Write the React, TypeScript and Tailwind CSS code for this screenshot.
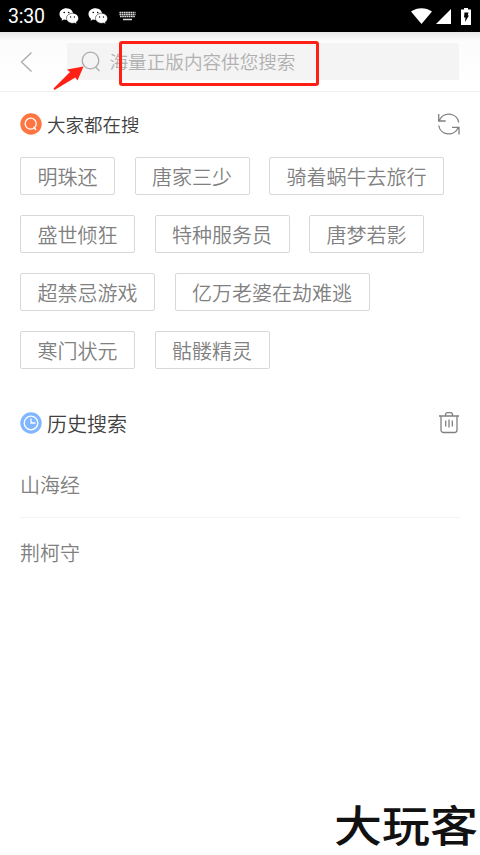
const hotWords = [
  '明珠还',
  '唐家三少',
  '骑着蜗牛去旅行',
  '盛世倾狂',
  '特种服务员',
  '唐梦若影',
  '超禁忌游戏',
  '亿万老婆在劫难逃',
  '寒门状元',
  '骷髅精灵',
];

const history = ['山海经', '荆柯守'];

function WeChatIcon() {
  return (
    <svg className="h-[17px] w-5" viewBox="0 0 20 17" fill="none">
      <path d="M7.500.3C3.600.3.500 2.900.5 6.200c0 1.900 1 3.500 2.600 4.500l-.6 2.100 2.500-1.200c.8.200 1.600.3 2.500.3 3.900 0 6.700-2.600 6.700-5.700S11.400.3 7.500.3Z" fill="#fff" />
      <path d="M13.500 5.300c-3.400 0-6 2.200-6 5s2.600 5 6 5c.7 0 1.400-.1 2-.3l2.200 1.100-.5-1.900c1.400-.9 2.300-2.300 2.300-3.900 0-2.800-2.600-5-6-5Z" fill="#fff" stroke="#000" strokeWidth=".5" />
      <circle cx="5.200" cy="4.500" r=".8" fill="#000" />
      <circle cx="9.700" cy="4.500" r=".8" fill="#000" />
      <circle cx="11.600" cy="9" r=".65" fill="#000" />
      <circle cx="15.400" cy="9" r=".65" fill="#000" />
    </svg>
  );
}

function StatusBar() {
  return (
    <div className="flex h-8 items-center bg-black pr-[9px] pl-2 text-white">
      <span className="w-[50.500px] pt-[2px] font-['Roboto',sans-serif] text-[19.500px] leading-[30px] font-[450] tracking-[-0.2px]">3:30</span>
      <WeChatIcon />
      <div className="ml-[9.500px]">
        <WeChatIcon />
      </div>
      <svg className="ml-[11px] h-[10px] w-[17px]" viewBox="0 0 17 10" stroke="#ddd" fill="none">
        <path d="M.5 1.500h16M.5 3.500h16M1 5.500h15" strokeWidth="1.500" strokeDasharray="1.700 .5" />
        <path d="M4 8.500h9" strokeWidth="1.500" />
      </svg>
      <div className="ml-auto flex items-center">
        <svg className="h-4 w-[21px]" viewBox="0 0 21 16">
          <path d="M0 3.500C6-1 15-1 21 3.500L10.500 16Z" fill="#fff" />
        </svg>
        <svg className="ml-1 h-[15px] w-[15px]" viewBox="0 0 15 15">
          <path d="M15 0v15H0Z" fill="#fff" />
        </svg>
        <svg className="ml-[10px] h-[17px] w-[10px]" viewBox="0 0 10 17">
          <path d="M3 0h4v1.500h3V17H0V1.500h3Z" fill="#fff" />
          <path d="M3.500 4.500h4L6.700 7.500H8L4 14l.5-4.500H3Z" fill="#000" />
        </svg>
      </div>
    </div>
  );
}

function SearchBar() {
  return (
    <header className="relative flex h-[60px] items-center border-b border-[#f0f0f0] bg-linear-to-b from-[#e8e8e8] via-[#fcfcfc] via-15% to-white pr-[21px] pl-5">
      <svg className="h-[22px] w-[14px]" viewBox="0 0 14 22" fill="none" stroke="#aaa" strokeWidth="1.300">
        <path d="M11.500 1.500 1.500 11l10 9.500" />
      </svg>
      <div className="ml-[33px] flex h-[37px] flex-1 items-center rounded-xs bg-[#f4f4f4] pl-[14px]">
        <svg className="h-[21px] w-5" viewBox="0 0 20 21" fill="none" stroke="#aaa" strokeWidth="1.300">
          <circle cx="9.500" cy="9.500" r="8.300" />
          <path d="m14.500 16 4 4" />
        </svg>
        <span className="ml-[8.500px] text-[18.600px] leading-none text-[#b0b0b0]">海量正版内容供您搜索</span>
      </div>
      <div className="absolute top-[9px] left-[119px] h-[45px] w-[200px] rounded-[3px] border-3 border-[#ff2015]" />
      <svg className="absolute top-[34px] left-[53px] h-6 w-[31px]" viewBox="0 0 31 24">
        <path d="M.5 22.500 17 6 14 3.500 30.500.5 24.500 14.500 22.300 11.500 1.500 24Z" fill="#ff2015" />
      </svg>
    </header>
  );
}

function RefreshIcon() {
  return (
    <svg className="h-6 w-6" viewBox="0 0 24 24" fill="none" stroke="#808080" strokeWidth="1.300">
      <path d="M21.800 10.500A10.200 10.200 0 0 0 2.300 8.500M1.700 2v7h7M1.700 13.500A10.200 10.200 0 0 0 21.200 15.500M22 22.500v-7.200h-7" />
    </svg>
  );
}

function TrashIcon() {
  return (
    <svg className="h-6 w-6" viewBox="0 0 24 24" fill="none" stroke="#808080" strokeWidth="1.300">
      <path d="M2 5h20M4 5v14a2.500 2.500 0 0 0 2.500 2.500h11A2.500 2.500 0 0 0 20 19V5M8.500 5V3.800c0-1.400.8-2.200 2-2.200h3c1.200 0 2 .8 2 2.200V5M8.700 9.500v6M12 8.500v8M15.300 9.500v6" />
    </svg>
  );
}

export default function App() {
  return (
    <div className="relative h-[855px] w-[480px] overflow-hidden bg-white font-['Noto_Sans_CJK_SC',sans-serif] font-[350]">
      <StatusBar />
      <SearchBar />

      <main className="px-5">
        <section>
          <div className="flex h-16 items-center">
            <svg className="h-[22px] w-[22px]" viewBox="0 0 22 22" fill="none">
              <circle cx="11" cy="11" r="10.700" fill="#ff7541" />
              <circle cx="10.700" cy="10.700" r="5.500" stroke="#fff" strokeWidth="1.300" />
              <path d="m13.500 14 2.500 3" stroke="#fff" strokeWidth="1.300" />
            </svg>
            <h2 className="ml-[5px] text-[18.500px] leading-none text-[#404040]">大家都在搜</h2>
            <button className="-mr-[1px] ml-auto">
              <RefreshIcon />
            </button>
          </div>
          <div className="-mr-2 flex flex-wrap gap-x-[19.500px] gap-y-5 pt-[1px]">
            {hotWords.map((word) => (
              <span key={word} className="flex h-[38px] items-center rounded-xs border border-[#d8d8d8] px-[16.500px] pt-[2px] text-xl leading-none text-[#808080]">
                {word}
              </span>
            ))}
          </div>
        </section>

        <section className="mt-[30px]">
          <div className="flex h-12 items-center">
            <svg className="h-[22px] w-[22px]" viewBox="0 0 22 22" fill="none">
              <circle cx="11" cy="11" r="10.700" fill="#80b6ff" />
              <circle cx="11" cy="11" r="6.800" stroke="#fff" strokeWidth="1.300" />
              <path d="M11 6.500V11h4.500" stroke="#fff" strokeWidth="1.300" />
            </svg>
            <h2 className="ml-[5px] pt-[2px] text-xl leading-none text-[#404040]">历史搜索</h2>
            <button className="-mr-[1px] ml-auto">
              <TrashIcon />
            </button>
          </div>
          <ul className="pt-1">
            {history.map((item) => (
              <li key={item} className="flex h-[67px] items-center border-b border-[#f4f4f4] pt-[2px] text-xl leading-none text-[#808080] last:h-[68px] last:border-0">
                {item}
              </li>
            ))}
          </ul>
        </section>
      </main>

      <div className="absolute right-[2px] bottom-[2px] origin-center scale-y-90 text-[48px] leading-[60px] font-medium whitespace-nowrap text-[#111]">大玩客</div>
    </div>
  );
}
